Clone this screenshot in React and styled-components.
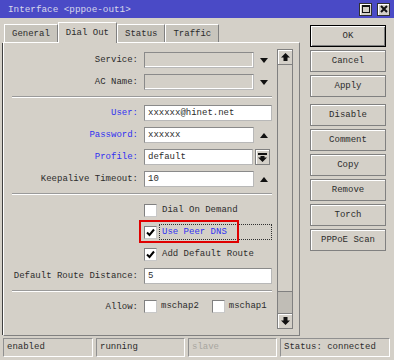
import React from 'react';
import styled, { createGlobalStyle } from 'styled-components';

const Global = createGlobalStyle`
  html, body {
    margin: 0;
    padding: 0;
    background: #d4d0c8;
  }
  body {
    font-family: "Liberation Mono", "DejaVu Sans Mono", monospace;
    font-size: 9px;
    color: #2c2c2c;
  }
`

const Window = styled.div`
  width: 394px;
  height: 360px;
  display: flex;
  flex-direction: column;
  background: #d4d0c8;
  overflow: hidden;
`

const TitleBar = styled.div`
  height: 18px;
  flex: none;
  background: #4a4ac6;
  display: flex;
  align-items: center;
  padding: 0 4px 0 8px;
  color: #d8d8ec;
  font-size: 9.3px;
`

const TitleText = styled.div`
  flex: 1;
`

const TitleButtons = styled.div`
  display: flex;
  gap: 5px;
`

const TitleButton = styled.div`
  width: 11px;
  height: 11px;
  border: 1px solid #303030;
  background: #d4d0c8;
  box-shadow: inset 1px 1px #fff;
  display: flex;
  align-items: center;
  justify-content: center;
`

const Main = styled.div`
  display: flex;
  padding: 2px 0 0 3px;
`

const LeftCol = styled.div`
  width: 297px;
  display: flex;
  flex-direction: column;
`

const TabRow = styled.div`
  height: 22px;
  display: flex;
  align-items: flex-end;
  padding-left: 1px;
`

const Tab = styled.div`
  height: ${p => (p.$active ? '21px' : '18px')};
  padding: 0 ${p => (p.$active ? '7px' : '7px')};
  display: flex;
  align-items: center;
  box-sizing: border-box;
  background: ${p => (p.$active ? '#d4d0c8' : '#c8c5bd')};
  border-top: 1px solid #fff;
  border-left: 1px solid #fff;
  border-right: 1px solid #808080;
  margin-bottom: ${p => (p.$active ? '-1px' : '0')};
  position: relative;
  z-index: ${p => (p.$active ? 2 : 1)};
`

const Panel = styled.div`
  height: 294px;
  box-sizing: border-box;
  border-top: 1px solid #fff;
  border-left: 1px solid #fff;
  border-right: 1px solid #808080;
  border-bottom: 1px solid #808080;
  box-shadow: -2px 0 0 -1px #404040;
  padding: 6px 6px 6px 0;
  display: flex;
  gap: 5px;
`

const Form = styled.div`
  width: 268px;
  padding-top: 3px;
  display: flex;
  flex-direction: column;
  gap: 7px;
`

const Row = styled.div`
  height: 15px;
  display: grid;
  grid-template-columns: 134px 128px;
  column-gap: 6px;
  align-items: start;
`

const Label = styled.div`
  text-align: right;
  line-height: 16px;
  white-space: nowrap;
  color: ${p => (p.$blue ? '#3030f0' : '#2c2c2c')};
`

const Field = styled.div`
  display: flex;
  align-items: center;
  gap: 2px;
  position: relative;
`

const Input = styled.div`
  flex: 1;
  height: 16px;
  box-sizing: border-box;
  border: 1px solid #8a8a8a;
  border-right-color: #b8b8b8;
  border-bottom-color: #b8b8b8;
  background: ${p => (p.$disabled ? '#d4d0c8' : '#fff')};
  box-shadow: ${p => (p.$disabled ? 'inset -1px -1px #fff' : 'none')};
  padding: 0 3px;
  line-height: 14px;
  white-space: nowrap;
  overflow: hidden;
`

const ArrowSlot = styled.div`
  width: 16px;
  height: 16px;
  display: flex;
  align-items: center;
  justify-content: center;
  flex: none;
`

const SmallButton = styled.div`
  width: 13px;
  height: 14px;
  margin: 0 2px 0 0;
  border: 1px solid #808080;
  box-shadow: inset 1px 1px #fff;
  display: flex;
  align-items: center;
  justify-content: center;
  flex: none;
`

const Separator = styled.div`
  height: 0;
  margin-left: 8px;
  width: 260px;
  border-top: 1px solid #9a9a9a;
  border-bottom: 1px solid #fff;
`

const Check = styled.div`
  width: 13px;
  height: 13px;
  box-sizing: border-box;
  flex: none;
  background: #fff;
  border: 1px solid #808080;
  border-right-color: #c8c8c8;
  border-bottom-color: #c8c8c8;
  display: flex;
  align-items: center;
  justify-content: center;
  margin-top: 1px;
`

const CheckLabel = styled.div`
  flex: 1;
  height: 16px;
  box-sizing: border-box;
  line-height: 14px;
  padding-left: 2px;
  border: 1px ${p => (p.$focus ? 'dotted #303030' : 'solid transparent')};
  color: ${p => (p.$blue ? '#3030f0' : '#2c2c2c')};
  white-space: nowrap;
`

const AllowItem = styled.div`
  display: flex;
  align-items: center;
  gap: 4px;
  margin-right: 11px;
`

const Highlight = styled.div`
  position: absolute;
  left: -5px;
  top: -4px;
  width: 100px;
  height: 23px;
  box-sizing: border-box;
  border: 2px solid #e00000;
  pointer-events: none;
`

const Scrollbar = styled.div`
  width: 16px;
  display: flex;
  flex-direction: column;
  flex: none;
`

const ScrollButton = styled.div`
  height: 16px;
  box-sizing: border-box;
  border: 1px solid #808080;
  box-shadow: inset 1px 1px #fff;
  display: flex;
  align-items: center;
  justify-content: center;
`

const Track = styled.div`
  flex: 1;
  border-left: 1px solid #808080;
  border-right: 1px solid #808080;
  display: flex;
  flex-direction: column;
  justify-content: flex-end;
`

const Thumb = styled.div`
  height: 21px;
  background: #c0bdb6;
  border-top: 1px solid #808080;
`

const ButtonCol = styled.div`
  margin-left: 10px;
  padding-top: 5px;
  width: 76px;
  display: flex;
  flex-direction: column;
  gap: 3px;
`

const Button = styled.div`
  height: 22px;
  box-sizing: border-box;
  border: 1px solid ${p => (p.$default ? '#000' : '#808080')};
  box-shadow: inset 1px 1px #fff${p => (p.$default ? ', inset -1px -1px #808080' : '')};
  display: flex;
  align-items: center;
  justify-content: center;
  margin-top: ${p => (p.$spaced ? '4px' : '0')};
`

const StatusBar = styled.div`
  margin-top: 2px;
  padding-left: 3px;
  display: flex;
  gap: 3px;
  height: 19px;
`

const StatusCell = styled.div`
  width: ${p => p.$w}px;
  box-sizing: border-box;
  border-top: 1px solid #909090;
  border-left: 1px solid #909090;
  border-right: 1px solid #fff;
  border-bottom: 1px solid #fff;
  padding-left: 3px;
  line-height: 17px;
  color: ${p => (p.$dim ? '#a8a6a0' : '#2c2c2c')};
`

const DownTri = () => (
  <svg width="8" height="5" viewBox="0 0 8 5"><polygon points="0,0 8,0 4,5" fill="#111" /></svg>
)

const UpTri = () => (
  <svg width="8" height="5" viewBox="0 0 8 5"><polygon points="0,5 8,5 4,0" fill="#111" /></svg>
)

const ArrowUp = () => (
  <svg width="9" height="8" viewBox="0 0 9 8"><polygon points="4.5,0 9,4.5 6.5,4.5 6.5,8 2.5,8 2.5,4.5 0,4.5" fill="#111" /></svg>
)

const ArrowDown = () => (
  <svg width="9" height="8" viewBox="0 0 9 8"><polygon points="4.5,8 9,3.5 6.5,3.5 6.5,0 2.5,0 2.5,3.5 0,3.5" fill="#111" /></svg>
)

const BarDown = () => (
  <svg width="9" height="9" viewBox="0 0 9 9">
    <rect x="0" y="0" width="9" height="2" fill="#111" />
    <polygon points="4.5,9 9,4.5 6.5,4.5 6.5,3 2.5,3 2.5,4.5 0,4.5" fill="#111" />
  </svg>
)

const Tick = () => (
  <svg width="9" height="9" viewBox="0 0 9 9"><path d="M1 4.5 L3.5 7 L8 1.5" stroke="#000" strokeWidth="2" fill="none" /></svg>
)

const CheckBox = ({ checked }) => <Check>{checked && <Tick />}</Check>

const App = () => {
  return (
    <Window>
      <Global />
      <TitleBar>
        <TitleText>Interface &lt;pppoe-out1&gt;</TitleText>
        <TitleButtons>
          <TitleButton>
            <svg width="8" height="8" viewBox="0 0 8 8"><rect x="0.5" y="0.5" width="7" height="7" fill="none" stroke="#111" /><rect x="0" y="0" width="8" height="2" fill="#111" /></svg>
          </TitleButton>
          <TitleButton>
            <svg width="8" height="8" viewBox="0 0 8 8"><path d="M1 1 L7 7 M7 1 L1 7" stroke="#111" strokeWidth="2" /></svg>
          </TitleButton>
        </TitleButtons>
      </TitleBar>

      <Main>
        <LeftCol>
          <TabRow>
            <Tab>General</Tab>
            <Tab $active>Dial Out</Tab>
            <Tab>Status</Tab>
            <Tab>Traffic</Tab>
          </TabRow>
          <Panel>
            <Form>
              <Row>
                <Label>Service:</Label>
                <Field><Input $disabled /><ArrowSlot><DownTri /></ArrowSlot></Field>
              </Row>
              <Row>
                <Label>AC Name:</Label>
                <Field><Input $disabled /><ArrowSlot><DownTri /></ArrowSlot></Field>
              </Row>
              <Separator />
              <Row>
                <Label $blue>User:</Label>
                <Field><Input>xxxxxx@hinet.net</Input></Field>
              </Row>
              <Row>
                <Label $blue>Password:</Label>
                <Field><Input>xxxxxx</Input><ArrowSlot><UpTri /></ArrowSlot></Field>
              </Row>
              <Row>
                <Label $blue>Profile:</Label>
                <Field><Input>default</Input><SmallButton><BarDown /></SmallButton></Field>
              </Row>
              <Row>
                <Label>Keepalive Timeout:</Label>
                <Field><Input>10</Input><ArrowSlot><UpTri /></ArrowSlot></Field>
              </Row>
              <Separator />
              <Row>
                <span />
                <Field><CheckBox /><CheckLabel>Dial On Demand</CheckLabel></Field>
              </Row>
              <Row>
                <span />
                <Field>
                  <CheckBox checked />
                  <CheckLabel $focus $blue>Use Peer DNS</CheckLabel>
                  <Highlight />
                </Field>
              </Row>
              <Row>
                <span />
                <Field><CheckBox checked /><CheckLabel>Add Default Route</CheckLabel></Field>
              </Row>
              <Row>
                <Label>Default Route Distance:</Label>
                <Field><Input>5</Input></Field>
              </Row>
              <Separator />
              <Row>
                <Label>Allow:</Label>
                <Field>
                  <AllowItem><CheckBox /><span>mschap2</span></AllowItem>
                  <AllowItem><CheckBox /><span>mschap1</span></AllowItem>
                </Field>
              </Row>
            </Form>
            <Scrollbar>
              <ScrollButton><ArrowUp /></ScrollButton>
              <Track><Thumb /></Track>
              <ScrollButton><ArrowDown /></ScrollButton>
            </Scrollbar>
          </Panel>
        </LeftCol>

        <ButtonCol>
          <Button $default>OK</Button>
          <Button>Cancel</Button>
          <Button>Apply</Button>
          <Button $spaced>Disable</Button>
          <Button>Comment</Button>
          <Button>Copy</Button>
          <Button>Remove</Button>
          <Button>Torch</Button>
          <Button>PPPoE Scan</Button>
        </ButtonCol>
      </Main>

      <StatusBar>
        <StatusCell $w={90}>enabled</StatusCell>
        <StatusCell $w={89}>running</StatusCell>
        <StatusCell $w={89} $dim>slave</StatusCell>
        <StatusCell $w={110}>Status: connected</StatusCell>
      </StatusBar>
    </Window>
  );
}

export default App;
